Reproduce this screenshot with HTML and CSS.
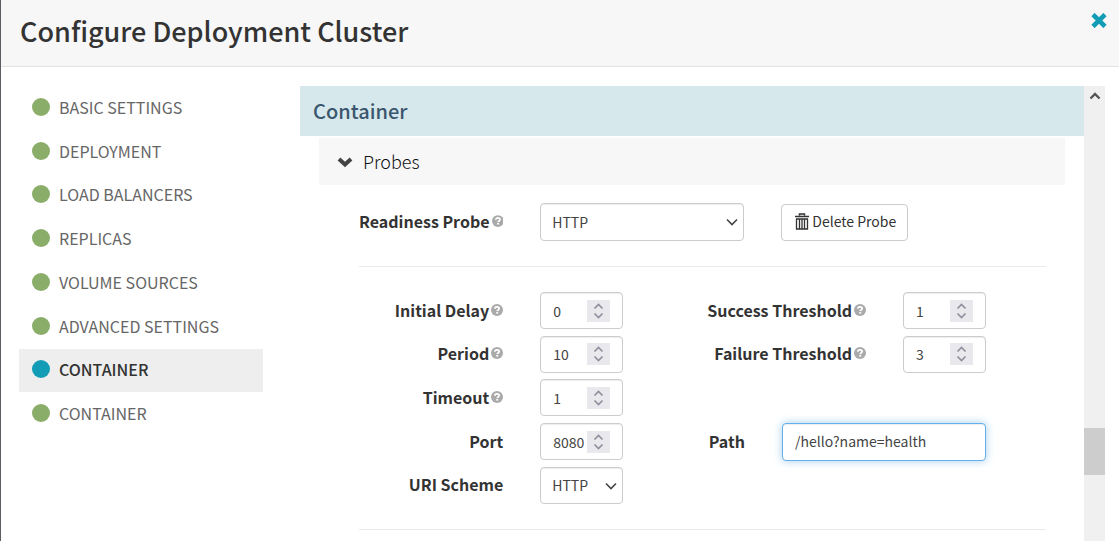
FILE: index.html
```html
<!DOCTYPE html>
<html lang="en">
<head>
    <meta charset="UTF-8">
    <meta name="viewport" content="width=device-width, initial-scale=1.0">
    <title>Configure Deployment Cluster</title>
    <link rel="stylesheet" href="styles.css">
</head>
<body>

<!-- shared icons -->
<svg class="sprite" aria-hidden="true">
    <symbol id="help" viewBox="0 0 12 12">
        <circle cx="6" cy="6" r="6" fill="#aaa"/>
        <path d="M3.9 4.7C3.9 3.3 4.8 2.8 6 2.8s2.2.6 2.2 1.8c0 1.4-1.9 1.2-1.9 2.4" fill="none" stroke="#fff" stroke-width="1.7"/>
        <rect x="5.3" y="7.9" width="1.9" height="1.7" fill="#fff"/>
    </symbol>
    <symbol id="caret" viewBox="0 0 12 8">
        <path d="M1 1.500L6 6.500l5-5" fill="none" stroke="#444" stroke-width="1.600"/>
    </symbol>
    <symbol id="updown" viewBox="0 0 23 22">
        <path d="M7.500 8.500l4-4 4 4M7.500 13.500l4 4 4-4" fill="none" stroke="#8f8f9d" stroke-width="1.700"/>
    </symbol>
</svg>

<div class="modal">
    <header>
        <h1>Configure Deployment Cluster</h1>
        <button class="close-btn" type="button" aria-label="Close">
            <svg width="16" height="15" viewBox="0 0 16 15"><path d="M2 1.500l12 12M14 1.500l-12 12" stroke="#139cb5" stroke-width="4.600"/></svg>
        </button>
    </header>

    <div class="modal-body">
        <nav>
            <a href="#basic"><span class="dot"></span>BASIC SETTINGS</a>
            <a href="#deployment"><span class="dot"></span>DEPLOYMENT</a>
            <a href="#balancers"><span class="dot"></span>LOAD BALANCERS</a>
            <a href="#replicas"><span class="dot"></span>REPLICAS</a>
            <a href="#volumes"><span class="dot"></span>VOLUME SOURCES</a>
            <a href="#advanced"><span class="dot"></span>ADVANCED SETTINGS</a>
            <a href="#container" class="active"><span class="dot"></span>CONTAINER</a>
            <a href="#container2"><span class="dot"></span>CONTAINER</a>
        </nav>

        <main>
            <h2>Container</h2>

            <section>
                <h3>
                    <svg width="16" height="12" viewBox="0 0 16 12"><path d="M2 3l6 5.500L14 3" fill="none" stroke="#444" stroke-width="4"/></svg>
                    Probes
                </h3>

                <form class="probe-form">
                    <div class="form-row probe-type">
                        <label for="readiness">Readiness Probe <svg class="help"><use href="#help"/></svg></label>
                        <div class="select-box wide">
                            <select id="readiness"><option>HTTP</option></select>
                            <svg class="caret"><use href="#caret"/></svg>
                        </div>
                        <button class="delete-btn" type="button">
                            <svg width="14" height="17" viewBox="0 0 14 17">
                                <path d="M4.500 2.500V1h5v1.500M0 3.500h14M1 6h12" fill="none" stroke="#333" stroke-width="1.500"/>
                                <path d="M1.500 6v10h11V6M4.500 6v10M7 6v10M9.500 6v10" fill="none" stroke="#333" stroke-width="1.300"/>
                            </svg>
                            Delete Probe
                        </button>
                    </div>

                    <div class="fields">
                        <div class="form-row">
                            <label for="delay">Initial Delay <svg class="help"><use href="#help"/></svg></label>
                            <div class="number-box"><input type="number" id="delay" value="0"><svg class="spin"><use href="#updown"/></svg></div>
                            <div class="right">
                                <label for="success">Success Threshold <svg class="help"><use href="#help"/></svg></label>
                                <div class="number-box"><input type="number" id="success" value="1"><svg class="spin"><use href="#updown"/></svg></div>
                            </div>
                        </div>
                        <div class="form-row">
                            <label for="period">Period <svg class="help"><use href="#help"/></svg></label>
                            <div class="number-box"><input type="number" id="period" value="10"><svg class="spin"><use href="#updown"/></svg></div>
                            <div class="right">
                                <label for="failure">Failure Threshold <svg class="help"><use href="#help"/></svg></label>
                                <div class="number-box"><input type="number" id="failure" value="3"><svg class="spin"><use href="#updown"/></svg></div>
                            </div>
                        </div>
                        <div class="form-row">
                            <label for="timeout">Timeout <svg class="help"><use href="#help"/></svg></label>
                            <div class="number-box"><input type="number" id="timeout" value="1"><svg class="spin"><use href="#updown"/></svg></div>
                        </div>
                        <div class="form-row">
                            <label for="port">Port</label>
                            <div class="number-box"><input type="number" id="port" value="8080"><svg class="spin"><use href="#updown"/></svg></div>
                            <div class="right">
                                <label for="path">Path</label>
                                <input type="text" id="path" class="path-input" value="/hello?name=health">
                            </div>
                        </div>
                        <div class="form-row">
                            <label for="scheme">URI Scheme</label>
                            <div class="select-box">
                                <select id="scheme"><option>HTTP</option></select>
                                <svg class="caret"><use href="#caret"/></svg>
                            </div>
                        </div>
                    </div>
                </form>
            </section>
        </main>

        <div class="scrollbar">
            <svg width="12" height="8" viewBox="0 0 12 8"><path d="M1.500 6.500L6 2l4.500 4.500" fill="none" stroke="#555" stroke-width="2.400"/></svg>
            <div class="thumb"></div>
        </div>
    </div>
</div>

</body>
</html>
```

FILE: styles.css
```css
* {
    box-sizing: border-box;
}

body {
    font-family: "Noto Sans CJK SC", "Open Sans", sans-serif;
    margin: 0;
    background: #fff;
    color: #333;
}

.sprite {
    display: none;
}

.modal {
    display: flex;
    flex-direction: column;
    height: 100vh;
    border-left: 1px solid #5a5e62;
    overflow: hidden;
}

header {
    display: flex;
    justify-content: space-between;
    align-items: flex-start;
    height: 67px;
    flex-shrink: 0;
    padding: 11px 12px 0 19px;
    background: #f7f7f7;
    border-bottom: 1px solid #e3e3e3;
}

h1 {
    margin: 0;
    font-size: 27px;
    line-height: 40px;
    font-weight: 500;
}

.close-btn {
    padding: 2px 0;
    border: none;
    background: none;
    cursor: pointer;
}

svg {
    display: block;
}

.modal-body {
    display: flex;
    flex: 1;
    min-height: 0;
    padding: 19px 14px 0 18px;
}

/* sidebar */
nav {
    display: grid;
    grid-auto-rows: 1fr;
    width: 244px;
    height: 350px;
    margin-right: 37px;
    flex-shrink: 0;
}

nav a {
    display: flex;
    align-items: center;
    gap: 9px;
    padding: 0 0 2px 13px;
    font-size: 16px;
    line-height: 22px;
    color: #666;
    text-decoration: none;
}

nav a.active {
    background: #eee;
    color: #333;
    font-weight: 500;
}

.dot {
    width: 18px;
    height: 18px;
    border-radius: 50%;
    background: #8aad6a;
}

.active .dot {
    background: #139cb5;
}

/* main panel */
main {
    flex: 1;
    overflow: hidden;
}

h2 {
    margin: 0 0 2px;
    padding-left: 13px;
    font-size: 20px;
    line-height: 50px;
    font-weight: 500;
    color: #3a566e;
    background: #d6e8ec;
}

section {
    margin: 0 19px;
}

h3 {
    display: flex;
    align-items: center;
    gap: 10px;
    margin: 0;
    padding-left: 18px;
    font-size: 18px;
    line-height: 47px;
    font-weight: 300;
    color: #111;
    background: #f7f7f7;
}

.probe-form {
    padding: 0 19px 0 40px;
}

.form-row {
    display: flex;
    align-items: center;
    gap: 37px;
}

.form-row label {
    display: flex;
    align-items: center;
    justify-content: flex-end;
    gap: 2px;
    padding-bottom: 2px;
    font-size: 16px;
    line-height: 20px;
    font-weight: bold;
    white-space: nowrap;
}

.form-row > label {
    flex: 0 0 21%;
    min-width: 0;
}

.probe-type {
    padding: 18px 0 25px;
    border-bottom: 1px solid #eaeaea;
}

.fields {
    display: grid;
    grid-auto-rows: 1fr;
    height: 263px;
    padding: 22px 0;
    border-bottom: 1px solid #eaeaea;
}

.right {
    display: flex;
    align-items: center;
    gap: 37px;
    margin-left: auto;
    padding-right: 60px;
}

.help {
    width: 12px;
    height: 12px;
}

input, select, button {
    font-family: inherit;
    font-size: 14px;
    color: #444;
}

.number-box, .select-box select, .path-input, .delete-btn {
    height: 37px;
    border: 1px solid #ccc;
    border-radius: 4px;
    background: #fff;
    box-shadow: inset 0 1px 1px rgba(0, 0, 0, 0.07);
}

.number-box {
    display: flex;
    align-items: center;
    width: 83px;
    padding: 0 12px;
}

.number-box input {
    flex: 1;
    min-width: 0;
    padding: 0;
    border: none;
    outline: none;
    background: none;
    appearance: textfield;
}

.number-box input::-webkit-inner-spin-button {
    appearance: none;
    margin: 0;
}

.spin {
    width: 23px;
    height: 22px;
    background: #e9e9ed;
}

.select-box {
    position: relative;
    width: 83px;
}

.select-box.wide {
    width: 204px;
}

.select-box select {
    display: block;
    width: 100%;
    padding: 0 11px;
    appearance: none;
}

.select-box.wide select {
    height: 38px;
}

.caret {
    position: absolute;
    right: 6px;
    top: 15px;
    width: 12px;
    height: 8px;
    pointer-events: none;
}

.delete-btn {
    display: flex;
    align-items: center;
    gap: 3px;
    padding: 0 11px 2px 13px;
    color: #333;
    box-shadow: none;
    cursor: pointer;
}

.path-input {
    width: 204px;
    height: 38px;
    padding: 0 12px 2px;
    border-color: #66afe9;
    outline: none;
    box-shadow: inset 0 1px 1px rgba(0, 0, 0, 0.07), 0 0 8px rgba(102, 175, 233, 0.6);
}

/* scrollbar */
.scrollbar {
    display: flex;
    flex-direction: column;
    align-items: center;
    width: 21px;
    padding-top: 6px;
    background: #f0f0f0;
}

.thumb {
    width: 100%;
    height: 47px;
    margin-top: auto;
    margin-bottom: 66px;
    background: #cdcdcd;
}
```
